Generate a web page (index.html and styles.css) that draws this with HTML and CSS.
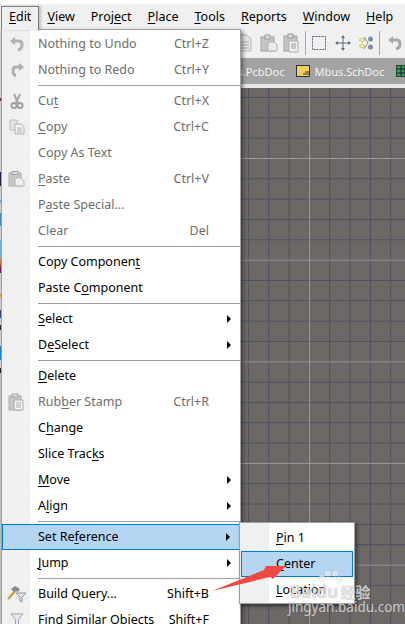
FILE: index.html
```html
<!DOCTYPE html>
<html lang="en">
<head>
<meta charset="utf-8">
<title>Edit menu</title>
<link rel="stylesheet" href="styles.css">
</head>
<body>
<div class="app">
  <nav class="menubar">
    <span class="top-item open"><u>E</u>dit</span>
    <span class="top-item"><u>V</u>iew</span>
    <span class="top-item">Proj<u>e</u>ct</span>
    <span class="top-item"><u>P</u>lace</span>
    <span class="top-item"><u>T</u>ools</span>
    <span class="top-item"><u>R</u>eports</span>
    <span class="top-item"><u>W</u>indow</span>
    <span class="top-item"><u>H</u>elp</span>
  </nav>
  <div class="toolbar">
    <svg class="tb-icon first" width="16" height="18" viewBox="0 0 16 18"><path d="M3 1h7l4 4v12H3z" fill="#e6e6e6" stroke="#b4b4b4"/><path d="M5 8h7M5 11h7M5 14h7" stroke="#a8a8a8"/></svg>
    <svg class="tb-icon" width="18" height="18" viewBox="0 0 18 18"><rect x="1" y="3" width="13" height="14" fill="#c4c4c4" stroke="#a4a4a4"/><rect x="5" y="1" width="5" height="4" fill="#dcdcdc" stroke="#9a9a9a"/><path d="M8 8h6l3 3v6H8z" fill="#ececec" stroke="#b0b0b0"/></svg>
    <svg class="tb-icon tight" width="18" height="20" viewBox="0 0 18 20"><rect x="1" y="3" width="13" height="15" fill="#c4c4c4" stroke="#a4a4a4"/><rect x="5" y="1" width="5" height="4" fill="#dcdcdc" stroke="#9a9a9a"/><path d="M6 8h9v11H6z" fill="#f2f2f2" stroke="#aaa"/><path d="M8 11h5M8 13h5M8 15h5" stroke="#999"/></svg>
    <span class="tb-sep"></span>
    <svg class="tb-icon wide" width="16" height="16" viewBox="0 0 16 16"><rect x="1.500" y="1.500" width="13" height="13" fill="none" stroke="#5a6480" stroke-dasharray="2 1"/></svg>
    <svg class="tb-icon mid" width="16" height="16" viewBox="0 0 16 16"><path d="M8 1v14M1 8h14" stroke="#5f6f86"/><path d="M8 0l2 3H6zM8 16l2-3H6zM0 8l3-2v4zM16 8l-3-2v4z" fill="#5f6f86"/></svg>
    <svg class="tb-icon" width="16" height="16" viewBox="0 0 16 16"><path d="M6 2l4 6-4 6" fill="none" stroke="#8a8a8a"/><path d="M1 5l3-2 3 2-3 2zM1 11l3-2 3 2-3 2z" fill="#f7ef9c" stroke="#cfc46a"/><circle cx="12.500" cy="4" r="2.500" fill="#7c8db0"/><circle cx="12.500" cy="12" r="2.500" fill="#7c8db0"/></svg>
    <span class="tb-sep last"></span>
    <svg class="tb-icon" width="16" height="16" viewBox="0 0 16 16"><path d="M4 5h6q3 0 3 4t-4 5" fill="none" stroke="#a8a8a8" stroke-width="3"/><path d="M6 1L1 5l5 4z" fill="#a8a8a8"/></svg>
  </div>
  <div class="tabs">
    <span class="tab">Mbus.PcbDoc</span>
    <span class="tab">
      <svg width="14" height="12" viewBox="0 0 14 12"><rect x=".5" y=".5" width="13" height="11" fill="#f3cf57" stroke="#26324f"/><path d="M7 9h6M9 7h4" stroke="#26324f"/></svg>
      Mbus.SchDoc
    </span>
    <span class="tab">
      <svg width="14" height="12" viewBox="0 0 14 12"><rect x=".5" y=".5" width="13" height="11" fill="#3f9d55" stroke="#1a4a2a"/><path d="M5 1v10M9 1v10M1 4h12M1 8h12" stroke="#123"/></svg>
    </span>
  </div>
  <div class="light-strip"></div>
  <main class="canvas"></main>
</div>

<div class="side-strip"></div>

<div class="menu">
  <div class="row off"><span class="ic"><svg width="16" height="16" viewBox="0 0 16 16"><path d="M4 5h6q3 0 3 4t-4 5" fill="none" stroke="#b0b0b0" stroke-width="3"/><path d="M6 1L1 5l5 4z" fill="#b0b0b0"/></svg></span><span class="lab">Nothing to Undo</span><span class="key">Ctrl+Z</span><span class="arr"></span></div>
  <div class="row off"><span class="ic"><svg width="16" height="16" viewBox="0 0 16 16"><path d="M12 5H7Q4 5 4 9t3 5" fill="none" stroke="#b0b0b0" stroke-width="3"/><path d="M10 1l5 4-5 4z" fill="#b0b0b0"/></svg></span><span class="lab">Nothing to Redo</span><span class="key">Ctrl+Y</span><span class="arr"></span></div>
  <div class="sep"></div>
  <div class="row off"><span class="ic"><svg width="16" height="16" viewBox="0 0 16 16"><path d="M5 1l4 9M11 1L7 10" stroke="#a6a6a6" stroke-width="2"/><circle cx="5" cy="12.500" r="2.500" fill="none" stroke="#a0a0a0" stroke-width="2"/><circle cx="11" cy="12.500" r="2.500" fill="none" stroke="#a0a0a0" stroke-width="2"/></svg></span><span class="lab">Cu<u>t</u></span><span class="key">Ctrl+X</span><span class="arr"></span></div>
  <div class="row off"><span class="ic"><svg width="16" height="16" viewBox="0 0 16 16"><path d="M1 1h7v10H1z" fill="#e4e4e4" stroke="#bcbcbc"/><path d="M6 5h6l3 3v7H6z" fill="#f2f2f2" stroke="#b0b0b0"/><path d="M8 9h5M8 11h5M8 13h5" stroke="#b0b0b0"/></svg></span><span class="lab"><u>C</u>opy</span><span class="key">Ctrl+C</span><span class="arr"></span></div>
  <div class="row off"><span class="ic"></span><span class="lab">Copy As Text</span><span class="arr"></span></div>
  <div class="row off"><span class="ic"><svg width="17" height="16" viewBox="0 0 17 16"><rect x="1" y="2" width="12" height="13" fill="#c6c6c6" stroke="#aeaeae"/><rect x="4" y="0.500" width="6" height="3" fill="#dedede" stroke="#a4a4a4"/><path d="M7 7h6l3 3v5H7z" fill="#eee" stroke="#b4b4b4"/></svg></span><span class="lab"><u>P</u>aste</span><span class="key">Ctrl+V</span><span class="arr"></span></div>
  <div class="row off"><span class="ic"></span><span class="lab">P<u>a</u>ste Special...</span><span class="arr"></span></div>
  <div class="row off"><span class="ic"></span><span class="lab">Clear</span><span class="key">Del</span><span class="arr"></span></div>
  <div class="sep"></div>
  <div class="row"><span class="ic"></span><span class="lab">Copy Componen<u>t</u></span><span class="arr"></span></div>
  <div class="row"><span class="ic"></span><span class="lab">Paste C<u>o</u>mponent</span><span class="arr"></span></div>
  <div class="sep"></div>
  <div class="row"><span class="ic"></span><span class="lab"><u>S</u>elect</span><span class="arr"><i></i></span></div>
  <div class="row"><span class="ic"></span><span class="lab">D<u>e</u>Select</span><span class="arr"><i></i></span></div>
  <div class="sep"></div>
  <div class="row"><span class="ic"></span><span class="lab"><u>D</u>elete</span><span class="arr"></span></div>
  <div class="row off"><span class="ic"><svg width="17" height="18" viewBox="0 0 17 18"><rect x="1" y="3" width="12" height="14" fill="#c6c6c6" stroke="#aeaeae"/><rect x="4" y="1" width="6" height="3" fill="#dedede" stroke="#a4a4a4"/><path d="M6 7h9v10H6z" fill="#f2f2f2" stroke="#aaa"/><path d="M8 10h5M8 12h5M8 14h5" stroke="#aaa"/></svg></span><span class="lab">Rub<u>b</u>er Stamp</span><span class="key">Ctrl+R</span><span class="arr"></span></div>
  <div class="row"><span class="ic"></span><span class="lab">C<u>h</u>ange</span><span class="arr"></span></div>
  <div class="row"><span class="ic"></span><span class="lab">Slice Trac<u>k</u>s</span><span class="arr"></span></div>
  <div class="row"><span class="ic"></span><span class="lab"><u>M</u>ove</span><span class="arr"><i></i></span></div>
  <div class="row"><span class="ic"></span><span class="lab">A<u>l</u>ign</span><span class="arr"><i></i></span></div>
  <div class="sep"></div>
  <div class="row sel"><span class="ic"></span><span class="lab">Set Re<u>f</u>erence</span><span class="arr"><i></i></span></div>
  <div class="row"><span class="ic"></span><span class="lab"><u>J</u>ump</span><span class="arr"><i></i></span></div>
  <div class="sep"></div>
  <div class="row"><span class="ic"><svg width="20" height="18" viewBox="0 0 20 18"><path d="M1 14L9 5" stroke="#c8a24a" stroke-width="2.500"/><path d="M4 4l4-3 5 3-2 3-3-2-1 2z" fill="#7d8a98"/><path d="M9 8h10l-4 4v5l-2-1v-4z" fill="#dfe4e8" stroke="#8c98a4"/></svg></span><span class="lab">Build Query...</span><span class="key">Shift+B</span><span class="arr"></span></div>
  <div class="row"><span class="ic"><svg width="16" height="14" viewBox="0 0 16 14"><path d="M2 1h12L9.500 6.500V13l-3-1.500v-5z" fill="#e6eaee" stroke="#98a4ae"/></svg></span><span class="lab">Find Similar Objects</span><span class="key">Shift+F</span><span class="arr"></span></div>
</div>

<div class="submenu">
  <div class="row"><span class="lab"><u>P</u>in 1</span></div>
  <div class="row sel"><span class="lab"><u>C</u>enter</span></div>
  <div class="row"><span class="lab"><u>L</u>ocation</span></div>
</div>

<div class="watermark">
  <svg class="paw" width="24" height="14" viewBox="0 0 24 14"><circle cx="4" cy="8" r="3"/><circle cx="10" cy="3.500" r="3"/><circle cx="17" cy="3.500" r="3"/><circle cx="21" cy="9" r="2.500"/></svg>
  <div class="wm-main"><span class="wm-bai">Baidu</span><span class="wm-cn">经验</span></div>
  <div class="wm-url">jingyan.baidu.com</div>
</div>

<svg class="pointer" width="405" height="624" viewBox="0 0 405 624"><polygon points="212,591 264,570 266,566 286,566 273,579 270,577" fill="#ee4a42"/></svg>
</body>
</html>
```

FILE: styles.css
```css
* { box-sizing: border-box; }
html, body { margin: 0; padding: 0; }
body {
  width: 405px;
  height: 624px;
  overflow: hidden;
  position: relative;
  background: #fff;
  font-family: "Noto Sans", "Liberation Sans", sans-serif;
  font-size: 12.500px;
  color: #000;
}
u { text-underline-offset: 2px; text-decoration-thickness: 1px; }

.app { display: flex; flex-direction: column; height: 624px; padding-top: 4px; }

.menubar {
  display: flex;
  height: 24px;
  padding: 2px 0 0 1px;
  background: #f0f0f0;
  flex: none;
}
.top-item {
  border: 1px solid transparent;
  padding: 0 7px;
  line-height: 20px;
  height: 24px;
  white-space: nowrap;
}
.top-item.open { border-color: #7d7d7d; border-bottom: 0; background: #f0f0f0; box-shadow: 2px 0 2px rgba(0,0,0,.2); position: relative; z-index: 3; }

.toolbar {
  display: flex;
  align-items: center;
  height: 30px;
  padding-left: 237px;
  background: #f0f0f0;
  flex: none;
}
.tb-icon { flex: none; margin-right: 5px; }
.tb-icon.first { margin-right: 7px; }
.tb-icon.tight { margin-right: 4px; }
.tb-icon.wide { margin-right: 8px; }
.tb-icon.mid { margin-right: 7px; }
.tb-sep { width: 1px; height: 24px; background: #a8a8a8; margin-right: 5px; flex: none; }
.tb-sep.last { margin-right: 7px; }

.tabs {
  display: flex;
  align-items: center;
  gap: 12px;
  height: 26px;
  padding-left: 214px;
  background: #a3a3a3;
  color: #f4f4f4;
  font-size: 11px;
  flex: none;
  white-space: nowrap;
  overflow: hidden;
}
.tab { display: flex; align-items: center; gap: 4px; }

.light-strip { height: 4px; background: #e6e6e6; flex: none; }

.canvas {
  flex: 1;
  background-color: #6c6865;
  background-image:
    linear-gradient(to right, #9b9999 1px, transparent 1px),
    linear-gradient(to bottom, #9b9999 1px, transparent 1px),
    linear-gradient(to right, #4f4d63 1px, transparent 1px),
    linear-gradient(to bottom, #4f4d63 1px, transparent 1px);
  background-size: 101.67px 100%, 100% 101.67px, 20.33px 100%, 100% 20.33px;
  background-position: 4px 0, 0 70px, 4px 0, 0 9px;
}

.side-strip {
  position: absolute;
  left: 0; top: 30px;
  width: 1px; height: 594px;
  background: linear-gradient(to bottom,
    #d8d8d8 0 68px, #8a2030 68px 71px, #d8d8d8 71px 142px, #1c2450 142px 156px,
    #d8d8d8 156px 170px, #62b0e8 170px 173px, #d8d8d8 173px 183px, #3f8fe0 183px 196px,
    #d8d8d8 196px 210px, #6cc0ee 210px 228px, #e09040 228px 232px, #7a1a50 238px 243px,
    #d8d8d8 243px 264px, #e8a030 264px 267px, #d8d8d8 267px 280px, #2a4a80 280px 288px,
    #d8d8d8 288px 295px, #20284a 295px 300px, #d8d8d8 300px 316px, #1880e8 316px 330px,
    #d8d8d8 330px 338px, #302020 338px 343px, #c8c8c8 343px);
}

.menu {
  position: absolute;
  left: 1px; top: 29px;
  width: 240px;
  height: 600px;
  overflow: hidden;
  padding-top: 1px;
  border: 1px solid #a0a0a0;
  background: linear-gradient(to right, #f0f0f0 28px, #fff 28px);
  box-shadow: 2px 2px 4px rgba(0,0,0,.45);
  z-index: 2;
}
.menu .row {
  display: flex;
  align-items: center;
  height: 26px;
  line-height: 24px;
  margin-right: -1px;
  white-space: nowrap;
  border: 1px solid transparent;
}
.menu .row.off { color: #6d6d6d; }
.menu .row.sel { background: #b5d6f3; border-color: #0078d7; margin-right: 0; }
.ic { width: 27px; height: 24px; display: flex; align-items: center; justify-content: center; flex: none; }
.lab { margin-left: 8px; flex: 1; }
.key { flex: none; }
.arr { width: 31px; height: 24px; display: flex; align-items: center; justify-content: flex-end; padding-right: 9px; flex: none; }
.arr i { width: 0; height: 0; border-left: 4px solid #000; border-top: 4px solid transparent; border-bottom: 4px solid transparent; }
.sep { height: 5px; padding-top: 2px; margin-left: 36px; margin-right: -1px; }
.sep::before { content: ""; display: block; height: 1px; background: #a0a0a0; }

.submenu {
  position: absolute;
  left: 239px; top: 522px;
  width: 116px;
  height: 82px;
  padding: 2px 1px;
  border: 1px solid #a0a0a0;
  background: linear-gradient(to right, #f0f0f0 29px, #fff 29px);
  box-shadow: 2px 2px 4px rgba(0,0,0,.45);
  z-index: 3;
}
.submenu .row { height: 26px; line-height: 24px; padding-left: 34px; border: 1px solid transparent; }
.submenu .row.sel { background: #b5d6f3; border-color: #0078d7; }
.submenu .lab { margin-left: 0; display: block; }

.watermark {
  position: absolute;
  left: 288px; top: 570px;
  width: 100px;
  height: 44px;
  color: rgba(255,255,255,.65);
  z-index: 4;
}
.paw { display: block; margin-left: 30px; fill: rgba(255,255,255,.6); filter: drop-shadow(0 0 1px rgba(110,110,110,.5)); }
.wm-main { display: flex; align-items: center; height: 16px; font-weight: 700; font-size: 17px; line-height: 16px; padding-left: 2px; text-shadow: 0 0 1px rgba(110,110,110,.6); }
.wm-cn { font-family: "Noto Sans CJK SC", sans-serif; font-size: 15px; font-weight: 700; margin-left: 2px; }
.wm-url { font-size: 13.500px; line-height: 14px; white-space: nowrap; text-shadow: 0 0 1px rgba(110,110,110,.4); }

.pointer { position: absolute; left: 0; top: 0; z-index: 5; pointer-events: none; }
```
